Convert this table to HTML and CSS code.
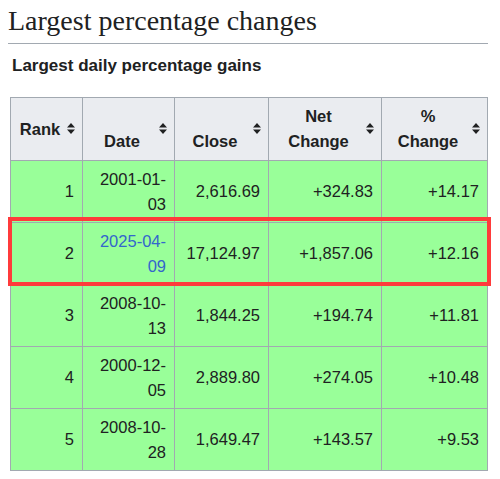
FILE: index.html
```html
<!DOCTYPE html>
<html lang="en">
<head>
    <meta charset="UTF-8">
    <meta name="viewport" content="width=device-width, initial-scale=1.0">
    <title>Largest percentage changes</title>
    <link rel="stylesheet" href="styles.css">
</head>
<body>
    <h2 class="section-title">Largest percentage changes</h2>

    <div class="table-wrap">
        <div class="caption">Largest daily percentage gains</div>
        <div class="table-box">
            <table class="gains">
                <colgroup>
                    <col class="c-rank">
                    <col class="c-date">
                    <col class="c-close">
                    <col class="c-net">
                    <col class="c-pct">
                </colgroup>
                <thead>
                    <tr>
                        <th>Rank<svg class="sort" viewBox="0 0 8 11"><path d="M4 0L8 4.5H0Z M0 6.5H8L4 11Z"/></svg></th>
                        <th><br>Date<svg class="sort" viewBox="0 0 8 11"><path d="M4 0L8 4.5H0Z M0 6.5H8L4 11Z"/></svg></th>
                        <th><br>Close<svg class="sort" viewBox="0 0 8 11"><path d="M4 0L8 4.5H0Z M0 6.5H8L4 11Z"/></svg></th>
                        <th>Net<br>Change<svg class="sort" viewBox="0 0 8 11"><path d="M4 0L8 4.5H0Z M0 6.5H8L4 11Z"/></svg></th>
                        <th>%<br>Change<svg class="sort" viewBox="0 0 8 11"><path d="M4 0L8 4.5H0Z M0 6.5H8L4 11Z"/></svg></th>
                    </tr>
                </thead>
                <tbody>
                    <tr>
                        <td>1</td>
                        <td>2001-01-<br>03</td>
                        <td>2,616.69</td>
                        <td>+324.83</td>
                        <td>+14.17</td>
                    </tr>
                    <tr>
                        <td>2</td>
                        <td><a href="#">2025-04-<br>09</a></td>
                        <td>17,124.97</td>
                        <td>+1,857.06</td>
                        <td>+12.16</td>
                    </tr>
                    <tr>
                        <td>3</td>
                        <td>2008-10-<br>13</td>
                        <td>1,844.25</td>
                        <td>+194.74</td>
                        <td>+11.81</td>
                    </tr>
                    <tr>
                        <td>4</td>
                        <td>2000-12-<br>05</td>
                        <td>2,889.80</td>
                        <td>+274.05</td>
                        <td>+10.48</td>
                    </tr>
                    <tr>
                        <td>5</td>
                        <td>2008-10-<br>28</td>
                        <td>1,649.47</td>
                        <td>+143.57</td>
                        <td>+9.53</td>
                    </tr>
                </tbody>
            </table>
            <!-- surlignage de la ligne du 9 avril -->
            <div class="highlight"></div>
        </div>
    </div>
</body>
</html>
```

FILE: styles.css
```css
body {
    margin: 8px;
    background: #fff;
    color: #202122;
    font-family: "Liberation Sans", Arial, sans-serif;
}

.section-title {
    font-family: "Liberation Serif", "Times New Roman", serif;
    font-size: 28px;
    font-weight: normal;
    line-height: 26px;
    margin: 0 4px 0 0;
    padding: 0 0 9px 0;
    border-bottom: 1px solid #a2a9b1;
}

.table-wrap {
    margin-left: 2px;
}

.caption {
    font-size: 17px;
    font-weight: bold;
    line-height: 25px;
    padding: 9px 0 19px 2px;
}

.table-box {
    position: relative;
    width: 477px;
}

/* Tableau des gains */
.gains {
    border-collapse: collapse;
    table-layout: fixed;
    width: 477px;
    font-size: 16.5px;
    line-height: 24.5px;
}

.c-rank { width: 72px; }
.c-date { width: 92px; }
.c-close { width: 94px; }
.c-net { width: 113px; }
.c-pct { width: 106px; }

.gains th,
.gains td {
    border: 1px solid #a2a9b1;
    padding: 6px 8px;
}

.gains th {
    position: relative;
    background: #eaecf0;
    text-align: center;
    padding-right: 21px;
    font-weight: bold;
    line-height: 25px;
}

.gains td {
    background: #9f9;
    text-align: right;
}

.gains a {
    color: #3366cc;
    text-decoration: none;
}

.sort {
    position: absolute;
    right: 7px;
    top: 50%;
    width: 8px;
    height: 11px;
    margin-top: -6px;
    fill: #202122;
}

.highlight {
    position: absolute;
    left: -2px;
    top: 120px;
    width: 475px;
    height: 61px;
    border: 4px solid #ff3b3b;
    pointer-events: none;
}
```
